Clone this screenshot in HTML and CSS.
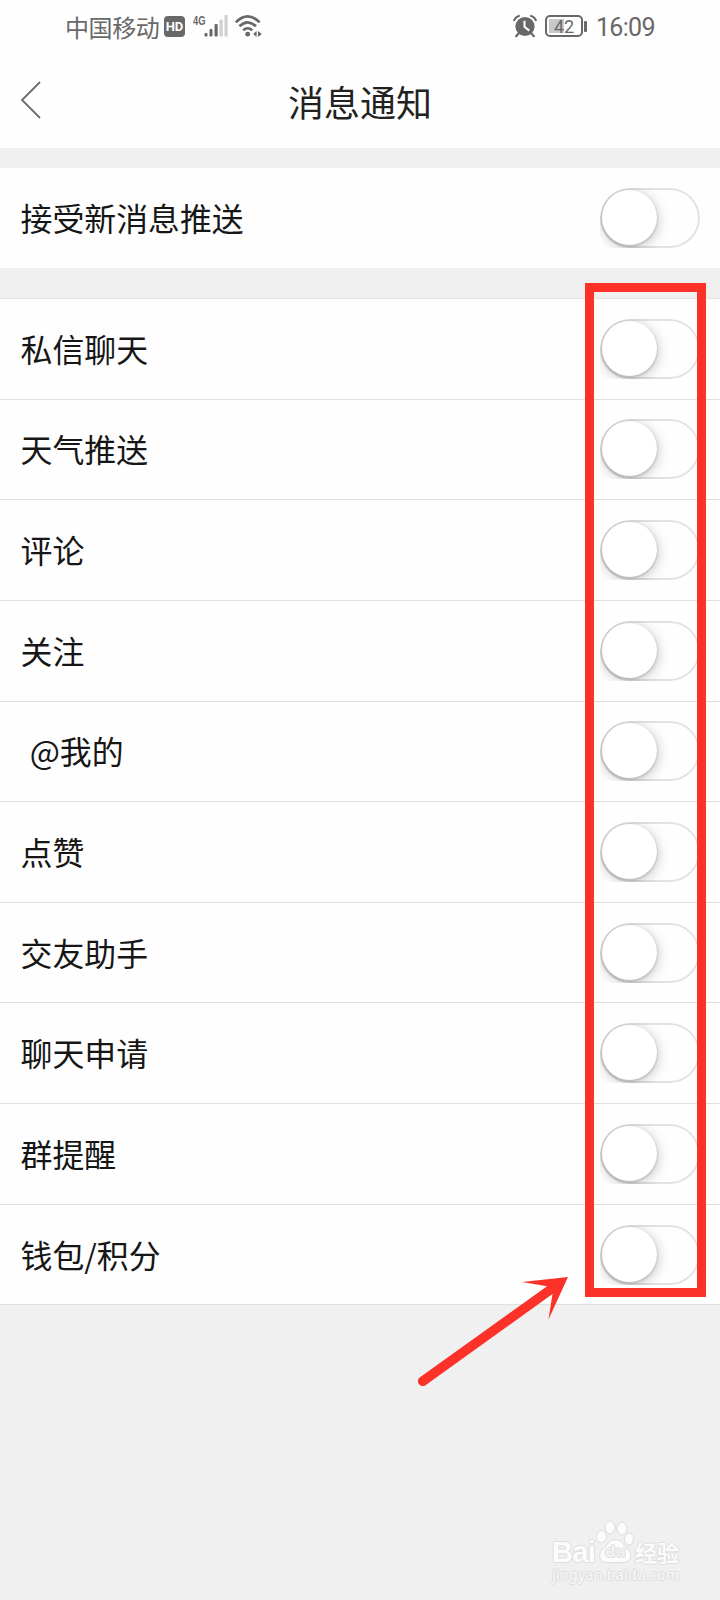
FILE: index.html
```html
<!DOCTYPE html>
<html lang="zh-CN">
<head>
<meta charset="utf-8">
<title>消息通知</title>
<link rel="stylesheet" href="styles.css">
</head>
<body>
<div class="screen">
  <div class="status">
    <span class="carrier">中国移动</span>
    <span class="hd">HD</span>
    <span class="net">4G</span>
    <svg class="signal" width="24" height="24" viewBox="0 0 24 24">
      <g fill="#686868"><rect x="0.5" y="19" width="3" height="3.5" rx="1"/><rect x="5.500" y="15" width="3" height="7.500" rx="1"/><rect x="10.500" y="10" width="3.200" height="12.500" rx="1"/></g>
      <g fill="#d0d0d0"><rect x="15.500" y="5.500" width="3.200" height="17" rx="1"/><rect x="20.500" y="1" width="3.200" height="21.500" rx="1"/></g>
    </svg>
    <svg class="wifi" width="28" height="24" viewBox="0 0 28 24">
      <g fill="none" stroke="#686868" stroke-width="2.600"><path d="M.8 8.400Q12.700-3.700 24.600 8.400"/><path d="M4.400 12.300Q12.700 4.300 21 12.300"/><path d="M8.200 16.300Q12.700 12.200 17.200 16.300"/></g>
      <circle cx="12.700" cy="20.200" r="2.400" fill="#686868"/>
      <path d="M21.600 17v6l-3.400-3zM23 17v6l3.700-3z" fill="#686868"/>
    </svg>
    <svg class="alarm" width="24" height="24" viewBox="0 0 24 24">
      <circle cx="12" cy="12.500" r="9.600" fill="#686868"/>
      <path d="M1.200 6.200Q2.500 3 5.800 2M18.200 2Q21.500 3 22.800 6.200M5.500 19.500l-2.300 2.700M18.500 19.500l2.300 2.700" fill="none" stroke="#686868" stroke-width="2.200" stroke-linecap="round"/>
      <path d="M11.500 6.800v6l4.700 3.800" fill="none" stroke="#fff" stroke-width="2"/>
    </svg>
    <span class="battery">42</span>
    <span class="cap"></span>
    <span class="time">16:09</span>
  </div>
  <header class="header">
    <svg class="back" width="20" height="38" viewBox="0 0 20 38"><path d="M19 1 1 19l18 18" fill="none" stroke="#6a6a6a" stroke-width="1.800"/></svg>
    <h1 class="title">消息通知</h1>
  </header>
  <div class="row push"><span class="label">接受新消息推送</span><span class="switch"><i class="knob"></i></span></div>
  <div class="list">
    <div class="row"><span class="label">私信聊天</span><span class="switch"><i class="knob"></i></span></div>
    <div class="row"><span class="label">天气推送</span><span class="switch"><i class="knob"></i></span></div>
    <div class="row"><span class="label">评论</span><span class="switch"><i class="knob"></i></span></div>
    <div class="row"><span class="label">关注</span><span class="switch"><i class="knob"></i></span></div>
    <div class="row"><span class="label mention"> @我的</span><span class="switch"><i class="knob"></i></span></div>
    <div class="row"><span class="label">点赞</span><span class="switch"><i class="knob"></i></span></div>
    <div class="row"><span class="label">交友助手</span><span class="switch"><i class="knob"></i></span></div>
    <div class="row"><span class="label">聊天申请</span><span class="switch"><i class="knob"></i></span></div>
    <div class="row"><span class="label">群提醒</span><span class="switch"><i class="knob"></i></span></div>
    <div class="row"><span class="label">钱包/积分</span><span class="switch"><i class="knob"></i></span></div>
  </div>
  <div class="frame"></div>
  <svg class="arrow" width="155" height="118" viewBox="415 1272 155 118">
    <path d="M420 1377.200 547 1286.200 522 1282 568 1277 548.500 1319.500 552.500 1294 425.500 1385.200A4.800 4.800 0 0 1 420 1377.200Z" fill="#fc3229"/>
  </svg>
  <div class="watermark">
    <div class="brand">
      <span class="bai">Bai</span>
      <span class="paw">
        <svg width="38" height="44" viewBox="0 0 38 44">
          <g fill="#fcfcfc" stroke="#dcdcdc"><ellipse cx="5.500" cy="16.500" rx="5" ry="6"/><ellipse cx="14" cy="7.500" rx="5" ry="6.500"/><ellipse cx="26" cy="8.500" rx="5" ry="6.500"/><ellipse cx="33" cy="19" rx="4.500" ry="6"/><path d="M19 19.500c-6 0-7 5-11 8.500-7 5-5 14.500 3 14.500h16c9 0 10-9 4-14.500-4-3.500-6-8.500-12-8.500z"/></g>
        </svg>
        <span class="du">du</span>
      </span>
      <span class="jy">经验</span>
    </div>
    <div class="site">jingyan.baidu.com</div>
  </div>
</div>
</body>
</html>
```
FILE: styles.css
```css
* { box-sizing: border-box; }
body { margin: 0; background: #f0f0f0; font-family: "Noto Sans CJK SC", sans-serif; color: #161616; }
.screen { position: relative; width: 720px; height: 1600px; overflow: hidden; background: #f0f0f0; }
.status { display: flex; align-items: flex-start; height: 54px; padding: 14px 0 0 65px; background: #fefefe; color: #686868; }
.carrier { width: 99px; font-size: 24px; line-height: 26px; letter-spacing: -0.4px; white-space: nowrap; }
.hd { width: 21px; height: 21px; margin-top: 2px; border-radius: 4px; background: #686868; color: #fff; font: bold 13px/21px Roboto, sans-serif; text-align: center; }
.net { width: 11px; margin-left: 8px; font: bold 13px/13px "Liberation Sans", sans-serif; transform: scaleX(.72); transform-origin: left; white-space: nowrap; }
.signal { flex: none; }
.wifi { flex: none; margin-left: 7px; }
.alarm { flex: none; margin-left: 250px; }
.battery { width: 38px; height: 22px; margin: 1px 0 0 8px; border: 2px solid #686868; border-radius: 5px; background: linear-gradient(90deg, #c8c8c8 15px, transparent 15px) 2px 2px / 29px 14px no-repeat; font: 18px/19px Roboto, sans-serif; text-align: center; }
.cap { width: 3px; height: 11px; margin: 7px 10px 0 1px; border-radius: 1px; background: #686868; }
.time { margin-left: -1px; font: 25px/28px Roboto, sans-serif; letter-spacing: -0.7px; }
.header { display: grid; grid-template-columns: 20px 1fr 20px; align-items: center; height: 94px; padding: 0 21px; background: #fefefe; }
.back { margin-top: -3px; }
.title { margin: -1px 0 0; font-size: 36px; line-height: 50px; font-weight: 400; text-align: center; color: #222; }
.row { display: flex; align-items: center; justify-content: space-between; height: 100.65px; padding: 0 20px; border-bottom: 1px solid #dfdfdf; background: #fefefe; }
.push { height: 100px; margin: 20px 0 30px; border: 0; }
.label { padding: 0 0 2px 0.5px; font-size: 31.9px; line-height: 44px; white-space: pre; }
.mention { padding-left: 2.5px; }
.list { border-top: 1px solid #e4e4e4; }
.switch { position: relative; width: 100px; height: 60px; padding: 2px; overflow: hidden; border-radius: 30px 30px 30px 10px; }
.switch::before { content: ""; position: absolute; inset: 0; border: 2.5px solid #e2e2e2; border-radius: 30px; }
.knob { position: relative; display: block; width: 55px; height: 55px; border-radius: 50%; background: #fff; box-shadow: 0 1px 3px rgba(0,0,0,.22), 1px 3px 13px rgba(0,0,0,.22); }
.frame { position: absolute; left: 585px; top: 283px; width: 121px; height: 1014px; border: 9px solid #fc3229; }
.arrow { position: absolute; left: 415px; top: 1272px; }
.watermark { position: absolute; left: 552px; top: 1521px; width: 140px; color: #fcfcfc; text-shadow: 1px 0 #dedede, -1px 0 #dedede, 0 1px #dedede, 0 -1px #dedede; }
.brand { display: flex; align-items: flex-end; height: 42px; }
.bai { width: 44px; font: bold 29px/22px "Liberation Sans", sans-serif; letter-spacing: -0.6px; }
.paw { position: relative; width: 38px; height: 43px; }
.du { position: absolute; left: 9px; top: 23px; font: bold 17px/17px "Liberation Sans", sans-serif; color: #f2f2f2; }
.jy { margin-left: 1px; font-size: 22px; line-height: 24px; font-weight: 700; white-space: nowrap; }
.site { margin-top: 3px; font: 15px/17px "Noto Sans", sans-serif; color: #f9f9f9; letter-spacing: -.15px; }
```
